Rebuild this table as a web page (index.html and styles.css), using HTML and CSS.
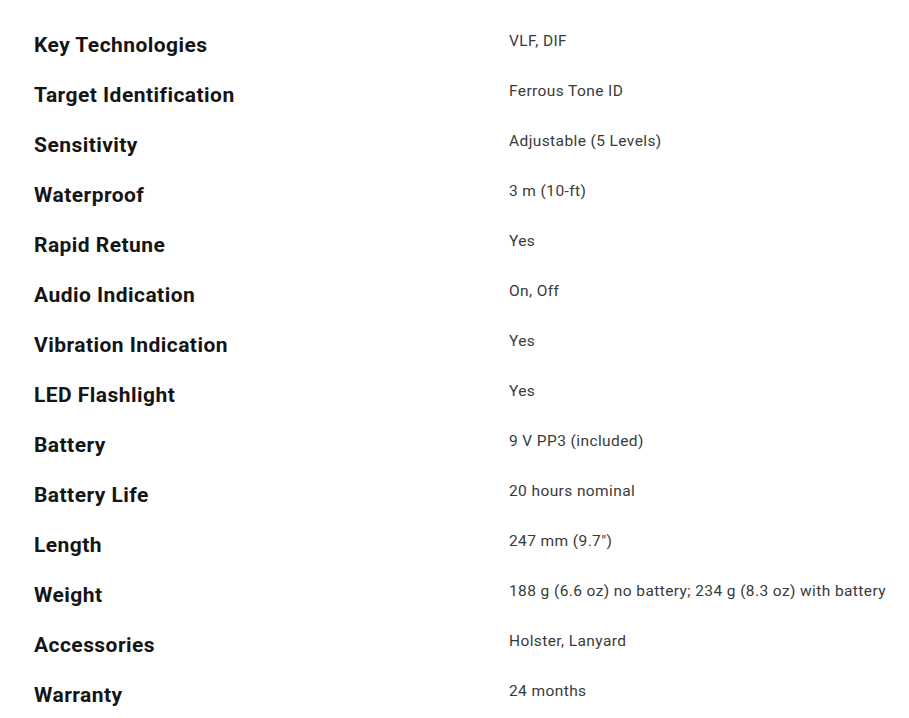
FILE: index.html
```html
<!DOCTYPE html>
<html>
<head>
<meta charset="utf-8">
<link rel="stylesheet" href="styles.css">
</head>
<body>
<div class="specs">
  <div class="row"><div class="label">Key Technologies</div><div class="value">VLF, DIF</div></div>
  <div class="row"><div class="label">Target Identification</div><div class="value">Ferrous Tone ID</div></div>
  <div class="row"><div class="label">Sensitivity</div><div class="value">Adjustable (5 Levels)</div></div>
  <div class="row"><div class="label">Waterproof</div><div class="value">3 m (10-ft)</div></div>
  <div class="row"><div class="label">Rapid Retune</div><div class="value">Yes</div></div>
  <div class="row"><div class="label">Audio Indication</div><div class="value">On, Off</div></div>
  <div class="row"><div class="label">Vibration Indication</div><div class="value">Yes</div></div>
  <div class="row"><div class="label">LED Flashlight</div><div class="value">Yes</div></div>
  <div class="row"><div class="label">Battery</div><div class="value">9 V PP3 (included)</div></div>
  <div class="row"><div class="label">Battery Life</div><div class="value">20 hours nominal</div></div>
  <div class="row"><div class="label">Length</div><div class="value">247 mm (9.7")</div></div>
  <div class="row"><div class="label">Weight</div><div class="value">188 g (6.6 oz) no battery; 234 g (8.3 oz) with battery</div></div>
  <div class="row"><div class="label">Accessories</div><div class="value">Holster, Lanyard</div></div>
  <div class="row"><div class="label">Warranty</div><div class="value">24 months</div></div>
</div>
</body>
</html>
```
FILE: styles.css
```css
html, body {
  margin: 0;
  padding: 0;
  background: #ffffff;
}
.specs {
  padding: 26px 0 0 34px;
}
.row {
  display: grid;
  grid-template-columns: 475px 1fr;
  height: 50px;
}
.label {
  font-family: Roboto, "Liberation Sans", sans-serif;
  font-weight: 700;
  font-size: 21px;
  letter-spacing: 0.45px;
  line-height: 39px;
  color: #151515;
}
.value {
  font-family: Roboto, "Liberation Sans", sans-serif;
  font-weight: 400;
  font-size: 15.5px;
  letter-spacing: 0.4px;
  line-height: 30px;
  color: #3a3a3a;
}
```
